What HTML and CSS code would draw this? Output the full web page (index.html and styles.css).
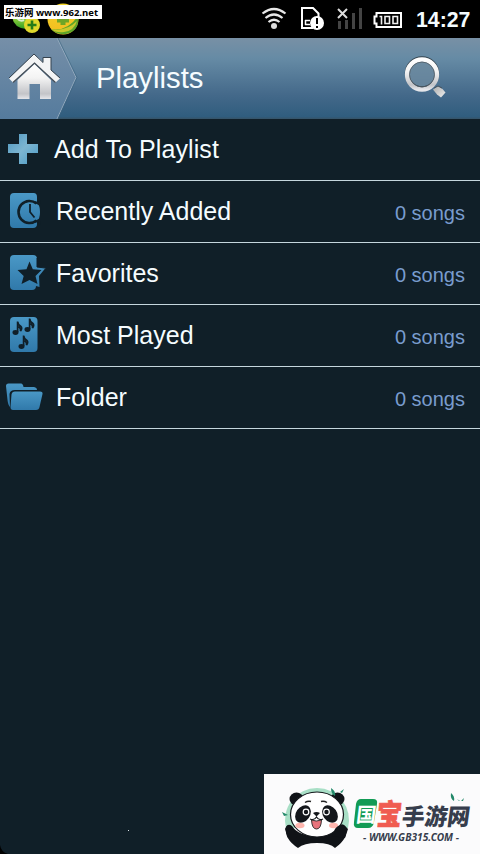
FILE: index.html
```html
<!DOCTYPE html>
<html lang="en">
<head>
<meta charset="utf-8">
<title>Playlists</title>
<link rel="stylesheet" href="styles.css">
</head>
<body>
<div class="screen">
  <div class="status">
    <svg class="notifications" width="110" height="38" viewBox="0 0 110 38">
      <defs>
        <linearGradient id="lime" x2="0" y2="1"><stop stop-color="#a9dc45"/><stop offset="1" stop-color="#2c9b22"/></linearGradient>
        <linearGradient id="gold" x2="0" y2="1"><stop stop-color="#f3d529"/><stop offset="1" stop-color="#f2bb20"/></linearGradient>
      </defs>
      <path d="M12 17Q14 28 26 29L34 16Z" fill="url(#lime)"/>
      <path d="M17 18q3 4 7 2" fill="none" stroke="#d9efcf" stroke-width="2"/>
      <circle cx="32" cy="25" r="8" fill="#dfd72b"/>
      <path d="M32 20.500v9M27.500 25h9" stroke="#247b18" stroke-width="2.600"/>
      <circle cx="63" cy="19" r="15.500" fill="url(#gold)"/>
      <path d="M51 29Q67 32 78 16Q80 31 66 34Q56 35 51 29Z" fill="#5da52a"/>
      <path d="M51 29Q66 32 77 21Q74 31 64 32Q56 33 51 29Z" fill="#c9c92a"/>
      <path d="M63 13v12M57 20h12" stroke="#6ea526" stroke-width="5"/>
    </svg>
    <div class="source">乐游网 www.962.net</div>
    <svg class="indicators" width="144" height="38" viewBox="260 0 144 38">
      <g fill="none" stroke="#e8e8e8" stroke-width="2.200">
        <path d="M262.500 13.500Q274 4.500 285.500 13.500"/>
        <path d="M265.500 18Q274 11 282.500 18"/>
        <path d="M268.500 22Q274 17.500 279.500 22"/>
      </g>
      <circle cx="274" cy="26" r="3" fill="#ddd"/>
      <path d="M313 28H302V8H313L318.500 13.500V17" fill="none" stroke="#fff" stroke-width="2"/>
      <path d="M305 20.500h5M305 24.500h5M305.500 20v5" fill="none" stroke="#fff" stroke-width="1.500"/>
      <circle cx="317" cy="23" r="7" fill="#fff"/>
      <path d="M317 18v6M317 26v2" stroke="#000" stroke-width="2"/>
      <path d="M338 21h3v8h-3zM345 20h3v9h-3zM352 13h3v16h-3zM359 8h3v21h-3z" fill="#444"/>
      <path d="M338 9l9 9M347 9l-9 9" stroke="#ddd" stroke-width="2"/>
      <path d="M376.500 13H401V27H376.500V23.500H374.500V16.500H376.500Z" fill="none" stroke="#fff" stroke-width="2"/>
      <path d="M379.500 16.500h2v8M385 16.500h4.500v7H385zM393 16.500h4.500v7H393z" fill="none" stroke="#eee" stroke-width="1.600"/>
    </svg>
    <time class="clock">14:27</time>
  </div>

  <header class="header">
    <svg class="home" width="80" height="81" viewBox="0 38 80 81">
      <defs>
        <linearGradient id="tab" x2="0" y2="1"><stop stop-color="#768fa8"/><stop offset="1" stop-color="#557b9d"/></linearGradient>
        <linearGradient id="silver" x2="0" y2="1"><stop stop-color="#fff"/><stop offset=".4" stop-color="#f3f3f3"/><stop offset=".85" stop-color="#c3c4c8"/><stop offset="1" stop-color="#e5e6ea"/></linearGradient>
      </defs>
      <path d="M0 38H57L76 77.500L57 119H0Z" fill="url(#tab)"/>
      <path d="M57 38L76 77.500L57 119" fill="none" stroke="#93a9bd"/>
      <path d="M58 38L77 77.500L58 119" fill="none" stroke="#3c6481" stroke-opacity=".6"/>
      <path d="M17.500 80L34.500 64L51 80V99H40V84H29.500V99H17.500Z" fill="url(#silver)"/>
      <path d="M9 78.500L34 54L43 62V58H51V70L60 78.500L55.500 82.500L34.500 63L13 82.500Z" fill="#f3f4f5"/>
      <path d="M9 78L34 54L43 62.500V57.500H51V70L60 78" fill="none" stroke="#35424e"/>
      <path d="M13 82.500L34.500 63L55.500 82.500" fill="none" stroke="#444d56" stroke-width="1.200"/>
    </svg>
    <h1 class="title">Playlists</h1>
    <svg class="search" width="48" height="48" viewBox="400 53 48 48">
      <defs><linearGradient id="handle" x2="1" y2="1"><stop stop-color="#aaa"/><stop offset="1" stop-color="#f0f0f0"/></linearGradient></defs>
      <path d="M433 89.500L438 86L442.500 89L445.500 92.500L441 97.500L437 94.500Z" fill="url(#handle)"/>
      <path d="M434 88L438 86L442 88" fill="none" stroke="#45515c"/>
      <circle cx="422" cy="73.500" r="15" fill="#718da1" fill-opacity=".65" stroke="#34444f" stroke-width="4.500"/>
      <circle cx="422" cy="74.500" r="14.900" fill="none" stroke="url(#silver)" stroke-width="4.500"/>
      <circle cx="422" cy="74.500" r="12.500" fill="none" stroke="#505c64" stroke-width=".8"/>
    </svg>
  </header>

  <svg class="defs" width="0" height="0"><defs><linearGradient id="blue" x2="0" y2="1"><stop stop-color="#4a98c6"/><stop offset="1" stop-color="#3079aa"/></linearGradient></defs></svg>

  <main class="list">
    <div class="row add">
      <svg class="icon" width="50" height="61" viewBox="0 119 50 61">
        <defs><linearGradient id="plus" x2="1" y2="1"><stop stop-color="#4c96c0"/><stop offset=".5" stop-color="#7db5d1"/><stop offset="1" stop-color="#4b9bc5"/></linearGradient></defs>
        <path d="M19 134h8v10h11v9H27v11h-8v-11H8v-9h11z" fill="url(#plus)"/>
      </svg>
      <span class="label">Add To Playlist</span>
    </div>
    <div class="row">
      <svg class="icon" width="50" height="61" viewBox="0 181 50 61">
        <path d="M14 193H33.500Q37 193 37 197V202Q40 206 40 212Q40 218 37 222V224Q37 228 33 228H14Q10 228 10 224V197Q10 193 14 193Z" fill="url(#blue)"/>
        <path d="M36.500 203.500A11 11 0 1 0 36.500 220.500" fill="none" stroke="#101f28" stroke-width="2.600"/>
        <path d="M35 202L39 204L40 200M35 222L39 220L40 225" fill="none" stroke="#101f28" stroke-width="2"/>
        <path d="M30 204v8l4.500 5.500" fill="none" stroke="#101f28" stroke-width="1.800"/>
      </svg>
      <span class="label">Recently Added</span><span class="count">0 songs</span>
    </div>
    <div class="row">
      <svg class="icon" width="50" height="61" viewBox="0 243 50 61">
        <path d="M14 255H33Q37 255 37 259V267L45.500 268L39 276L39.500 287L36 286Q36 290 32 290H14Q10 290 10 286V259Q10 255 14 255Z" fill="url(#blue)"/>
        <path d="M29.500 261.500L32.800 269.200L41.500 270L35.500 276L37.500 284L29.500 280L21.500 284L23.700 276L17.500 270L26.500 269.200Z" fill="#101f28"/>
        <path d="M37 258V267L45 268" fill="none" stroke="#101f28" stroke-width="1"/>
      </svg>
      <span class="label">Favorites</span><span class="count">0 songs</span>
    </div>
    <div class="row">
      <svg class="icon" width="50" height="61" viewBox="0 305 50 61">
        <rect x="10" y="317" width="27.500" height="35" rx="4" fill="url(#blue)"/>
        <g fill="#101f28" stroke="#101f28">
          <g id="note"><ellipse cx="15.500" cy="332.500" rx="3" ry="2.400" stroke="none"/><path d="M17.600 332V321.500Q18 325 21 326.500Q22.500 328 20.500 331Q21 327.500 17.500 326.500" fill="none" stroke-width="1.700"/></g>
          <use href="#note" x="12" y="-3"/><use href="#note" x="6" y="14"/>
        </g>
      </svg>
      <span class="label">Most Played</span><span class="count">0 songs</span>
    </div>
    <div class="row">
      <svg class="icon" width="50" height="61" viewBox="0 367 50 61">
        <path d="M6 386Q6 383.500 8.500 383.500H21Q23 383.500 23.500 387H34Q37 387.500 37 390H15Q10 390 9.500 394L10 407Q8 405 7.500 400Z" fill="url(#blue)"/>
        <path d="M15 391.500H40Q43 391.500 42.500 394L39.500 407Q39 410 36 410H13Q10.500 410 10.500 407L11.500 394.500Q12 391.500 15 391.500Z" fill="url(#blue)"/>
      </svg>
      <span class="label">Folder</span><span class="count">0 songs</span>
    </div>
  </main>

  <footer class="footer">
    <svg class="specks" width="140" height="30" viewBox="0 824 140 30"><path d="M0 845Q1 852 8 854H0Z" fill="#000"/><path d="M128 830h1v1h-1z" fill="#dce5e9"/></svg>
    <svg class="brand" width="216" height="80" viewBox="264 774 216 80">
      <path d="M264 774h216v80H264z" fill="#fbfbfc"/>
      <path d="M286 828A32 32 0 1 1 348 828Z" fill="#a8dfc6"/>
      <path d="M286 827Q288 823 292 826Q298 836 317 836Q333 836 338 826Q343 822 346 827Q349 838 335 848Q330 843 317 843Q304 843 298 848Q284 839 286 827Z" fill="#101317"/>
      <ellipse cx="296.500" cy="799" rx="7" ry="6.500" fill="#101317"/><ellipse cx="337.500" cy="799" rx="7" ry="6.500" fill="#101317"/>
      <ellipse cx="317" cy="814.500" rx="26.500" ry="22.500" fill="#fff" stroke="#14171b" stroke-width="1.200"/>
      <ellipse cx="303" cy="814" rx="7" ry="9.500" transform="rotate(35 303 814)" fill="#14171b"/>
      <ellipse cx="330" cy="814" rx="7" ry="9.500" transform="rotate(-35 330 814)" fill="#14171b"/>
      <g fill="#14171b" stroke="#fff" stroke-width="1.200"><circle cx="306" cy="812" r="2.800"/><circle cx="326.500" cy="812" r="2.800"/></g>
      <path d="M305 802.500q3-2 6-1M321 801.500q3-1 6 1" fill="none" stroke="#222" stroke-width="1.500"/>
      <path d="M313 813Q316.500 811 320 813L316.500 816.500Z" fill="#14171b"/>
      <path d="M310 819Q314 821 316.500 817Q319 821 323 819" fill="none" stroke="#14171b" stroke-width="1.200"/>
      <path d="M311.500 820Q316 822 321.500 820Q321 829 316.500 829Q312 829 311.500 820Z" fill="#e8747c" stroke="#222" stroke-width=".9"/>
      <ellipse cx="300" cy="825.500" rx="4.500" ry="2.800" fill="#ffb6ae"/><ellipse cx="333.500" cy="825.500" rx="4.500" ry="2.800" fill="#ffb6ae"/>
      <path d="M285 829Q288 822 293 828L297 838L288 838ZM348 829Q341 821 335 829L332 836L345 838Z" fill="#101317"/>
      <g fill="#24896a"><path d="M331 788q5 3 4 8q-4-2-4-8M282 812l6 3-4 1zM340 792l4-3-2 4zM451 793q4 3 3 8q-4-2-3-8M457 799l3 2-1 0zM461 801l3-3-1 3z"/></g>
      <path d="M361 799H373Q378 799 377 804L374 822Q373 828 368 828H358Q353 828 354 822L356 804Q357 799 361 799Z" fill="#129b55"/>
      <g class="brandname">
        <text transform="translate(355.500 821.500) skewX(-7)" fill="#fff" font-size="20" font-weight="700">国</text>
        <text transform="translate(376 825) skewX(-5)" fill="#f05c51" stroke="#f05c51" stroke-width=".8" font-size="29" textLength="25" lengthAdjust="spacingAndGlyphs">宝</text>
        <text transform="translate(401 825) skewX(-8)" fill="#363d4c" font-size="23" textLength="68" lengthAdjust="spacingAndGlyphs">手游网</text>
      </g>
      <text class="brandurl" x="363" y="841" textLength="96" lengthAdjust="spacingAndGlyphs">- WWW.GB315.COM -</text>
    </svg>
  </footer>
</div>
</body>
</html>
```

FILE: styles.css
```css
* { box-sizing: border-box; }
body { margin: 0; background: #101f28; }
.screen {
  display: flex;
  flex-direction: column;
  width: 480px;
  height: 854px;
  overflow: hidden;
  background: #101f28;
  color: #f5fcff;
  font-family: "Liberation Sans", Arial, sans-serif;
}
svg { display: block; flex: none; }
.status {
  position: relative;
  display: flex;
  flex: none;
  height: 38px;
  background: #000;
}
.source {
  position: absolute;
  top: 5px;
  left: 4px;
  width: 98px;
  height: 14px;
  padding-left: 1px;
  background: #fff;
  color: #000;
  font: bold 9.5px/15px "Open Sans", "Noto Sans CJK SC", sans-serif;
  white-space: nowrap;
}
.indicators { margin-left: 150px; }
.clock {
  margin-left: 12px;
  font-size: 21.3px;
  font-weight: bold;
  line-height: 40px;
}
.header {
  display: flex;
  flex: none;
  height: 81px;
  background: linear-gradient(#7890a5, #668ba5 25%, #44698a 70%, #305d7e 97%, #365367);
}
.title {
  flex: 1;
  margin: 0 0 0 16px;
  font-size: 29.3px;
  font-weight: normal;
  line-height: 80px;
}
.search { margin: 15px 32px 0 0; }
.defs { position: absolute; }
.list { flex: none; }
.row {
  display: flex;
  height: 62px;
  padding-right: 15px;
  border-bottom: 1px solid #c5d6dd;
}
.label {
  flex: 1;
  margin-left: 6px;
  font-size: 25px;
  line-height: 61px;
}
.add .label { margin-left: 4px; letter-spacing: 0.1px; }
.count {
  color: #799cce;
  font-size: 20px;
  line-height: 64px;
}
.footer {
  display: flex;
  align-items: flex-end;
  justify-content: space-between;
  margin-top: auto;
}
.brandname {
  font-family: "Noto Sans CJK SC", sans-serif;
  font-weight: 900;
}
.brandurl {
  fill: #363d4c;
  font: italic bold 10px "Noto Sans", sans-serif;
}
```
